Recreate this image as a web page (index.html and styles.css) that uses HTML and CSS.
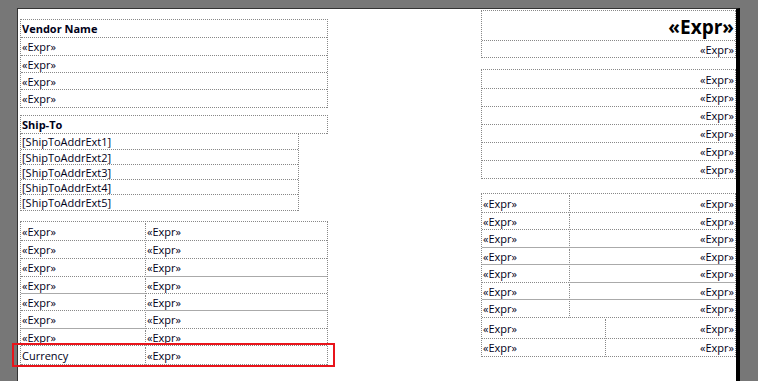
FILE: index.html
```html
<!DOCTYPE html>
<html lang="en">
<head>
  <meta charset="UTF-8" />
  <title>Purchase Order - Report Designer</title>
  <link rel="stylesheet" href="styles.css">
</head>
<body>
<div class="page">
  <!-- LEFT SIDE -->
  <div class="left">
    <div class="box vendor">
      <div class="row h18 bold">Vendor Name</div>
      <div class="row h18">«Expr»</div>
      <div class="row h17">«Expr»</div>
      <div class="row h17">«Expr»</div>
      <div class="row h18">«Expr»</div>
    </div>

    <div class="box shipto">
      <div class="row h18 bold">Ship-To</div>
    </div>
    <div class="box addr">
      <div class="row h16">[ShipToAddrExt1]</div>
      <div class="row h15">[ShipToAddrExt2]</div>
      <div class="row h15">[ShipToAddrExt3]</div>
      <div class="row h15">[ShipToAddrExt4]</div>
      <div class="row h16">[ShipToAddrExt5]</div>
    </div>

    <div class="box grid-left">
      <div class="pair h19"><span class="cell">«Expr»</span><span class="cell">«Expr»</span></div>
      <div class="pair h18"><span class="cell">«Expr»</span><span class="cell">«Expr»</span></div>
      <div class="pair h18 solid-r"><span class="cell">«Expr»</span><span class="cell">«Expr»</span></div>
      <div class="pair h17 solid-l"><span class="cell">«Expr»</span><span class="cell">«Expr»</span></div>
      <div class="pair h17 solid-r"><span class="cell">«Expr»</span><span class="cell">«Expr»</span></div>
      <div class="pair h18 solid-l"><span class="cell">«Expr»</span><span class="cell">«Expr»</span></div>
      <div class="pair h17"><span class="cell">«Expr»</span><span class="cell">«Expr»</span></div>
      <div class="pair h19 marked"><span class="cell">Currency</span><span class="cell">«Expr»</span></div>
    </div>
  </div>

  <!-- RIGHT SIDE -->
  <div class="right">
    <div class="box title">
      <div class="row h30 big">«Expr»</div>
      <div class="row h17">«Expr»</div>
    </div>

    <div class="box totals">
      <div class="row h19">«Expr»</div>
      <div class="row h18">«Expr»</div>
      <div class="row h18">«Expr»</div>
      <div class="row h18">«Expr»</div>
      <div class="row h18">«Expr»</div>
      <div class="row h18">«Expr»</div>
    </div>

    <div class="box grid-right">
      <div class="pair h19"><span class="cell">«Expr»</span><span class="cell">«Expr»</span></div>
      <div class="pair h17"><span class="cell">«Expr»</span><span class="cell">«Expr»</span></div>
      <div class="pair h18 solid-l solid-r"><span class="cell">«Expr»</span><span class="cell">«Expr»</span></div>
      <div class="pair h17 solid-l solid-r"><span class="cell">«Expr»</span><span class="cell">«Expr»</span></div>
      <div class="pair h18 solid-r"><span class="cell">«Expr»</span><span class="cell">«Expr»</span></div>
      <div class="pair h17 solid-l solid-r"><span class="cell">«Expr»</span><span class="cell">«Expr»</span></div>
      <div class="pair h18"><span class="cell">«Expr»</span><span class="cell">«Expr»</span></div>
      <div class="pair h21 wide"><span class="cell">«Expr»</span><span class="cell">«Expr»</span></div>
      <div class="pair h18 wide"><span class="cell">«Expr»</span><span class="cell">«Expr»</span></div>
    </div>
  </div>
</div>
</body>
</html>
```

FILE: styles.css
```css
body {
  margin: 0;
  background: #777;
  font-family: "Open Sans", Arial, sans-serif;
  font-size: 11px;
  color: #000018;
  height: 381px;
  overflow: hidden;
}
.page {
  margin: 8px 0 0 17px;
  width: 718px;
  height: 372px;
  background: #fff;
  border-top: 1px solid #333;
  border-left: 1px solid #333;
  border-right: 4px solid #000;
  display: flex;
  justify-content: space-between;
}
.left {
  width: 308px;
  margin-left: 2px;
}
.right {
  width: 255px;
}

/* field boxes */
.box {
  box-sizing: border-box;
  border: 1px dotted #888;
  border-bottom: none;
}
.row, .pair {
  box-sizing: border-box;
  border-bottom: 1px dotted #888;
  display: flex;
  align-items: center;
  padding: 0 1px;
  white-space: nowrap;
}
.pair { padding: 0; }
.bold { font-weight: bold; font-size: 11px; }

.h15 { height: 15px; }
.h16 { height: 16px; }
.h17 { height: 17px; }
.h18 { height: 18px; }
.h19 { height: 19px; }
.h21 { height: 21px; }
.h30 { height: 30px; }

.vendor { margin-top: 10px; }
.shipto { margin-top: 7px; }
.addr { width: 279px; border-top: none; }
.grid-left { margin-top: 10px; }

.cell {
  box-sizing: border-box;
  height: 100%;
  display: flex;
  align-items: center;
  padding: 0 1px;
  border-bottom: 1px solid transparent;
  margin-bottom: -1px;
}
.cell:first-child { border-right: 1px dotted #888; }
.cell:last-child { flex: 1; }
.grid-left .cell:first-child { width: 125px; }

.solid-l .cell:first-child { border-bottom-color: #aaa; }
.solid-r .cell:last-child { border-bottom-color: #aaa; }

.marked { position: relative; }
.marked::after {
  content: "";
  position: absolute;
  top: -3px;
  left: -9px;
  right: -8px;
  bottom: -3px;
  border: 2px solid #e8141b;
}

/* right side */
.right .row { justify-content: flex-end; }
.right .cell:last-child { justify-content: flex-end; }
.title { margin-top: 1px; }
.big {
  font-size: 19px;
  font-weight: bold;
  color: #000;
  padding-top: 2px;
}
.totals { margin-top: 11px; }
.grid-right { margin-top: 14px; }
.grid-right .cell:first-child { width: 88px; }
.grid-right .wide .cell:first-child { width: 124px; }
```
